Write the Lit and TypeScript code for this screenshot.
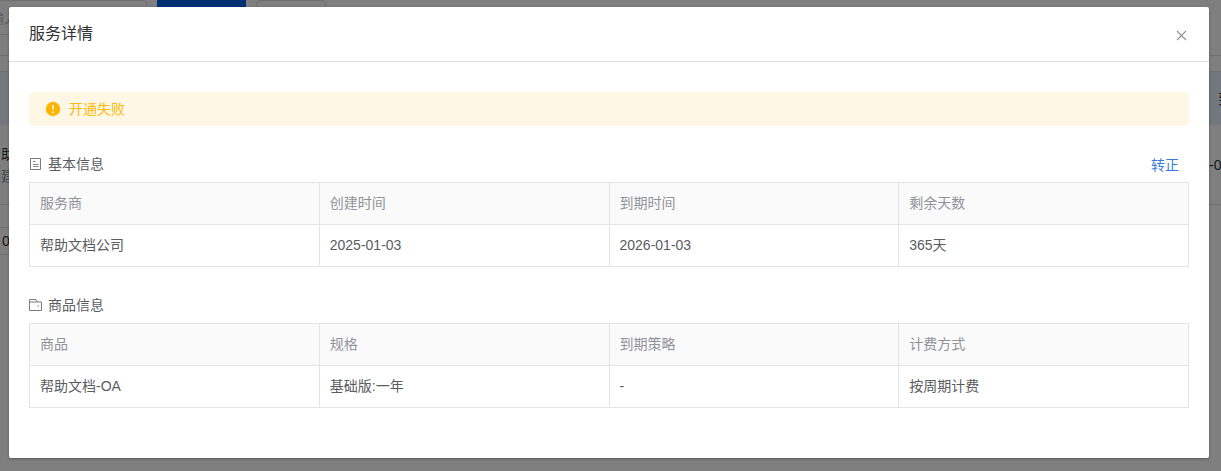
import { LitElement, html, css, svg } from "lit";
import { customElement, property } from "lit/decorators.js";

@customElement("info-table")
class InfoTable extends LitElement {
  @property({ attribute: false }) heads: string[] = [];
  @property({ attribute: false }) cells: string[] = [];
  @property() label = "";

  static styles = css`
    :host { display: block; }
    table {
      width: 100%;
      table-layout: fixed;
      border-collapse: collapse;
      font-size: 14px;
      line-height: 21px;
      color: #5a5c60;
    }
    th, td {
      padding: 10px;
      border: 1px solid #e4e4e6;
      text-align: left;
      font-weight: 400;
    }
    th { background: #fafafa; color: #909399; }
  `;

  render() {
    return html`
      <table aria-label=${this.label}>
        <thead><tr>${this.heads.map((h) => html`<th scope="col">${h}</th>`)}</tr></thead>
        <tbody><tr>${this.cells.map((c) => html`<td>${c}</td>`)}</tr></tbody>
      </table>
    `;
  }
}

@customElement("page-behind")
class PageBehind extends LitElement {
  static styles = css`
    :host {
      display: block;
      overflow: hidden;
      background: #fff;
      font-size: 14px;
      color: #515a6e;
    }
    .page { margin: 0 -64px; }
    .toolbar {
      display: flex;
      gap: 10px;
      padding: 0 64px 20px;
      border-bottom: 1px solid #dcdee2;
    }
    .search {
      box-sizing: border-box;
      width: 211px;
      height: 35px;
      margin-left: -64px;
      padding: 0 0 0 53px;
      border: 1px solid #dcdee2;
      border-radius: 4px;
      font: inherit;
    }
    .search::placeholder { color: #b0b4bc; opacity: 1; }
    button {
      box-sizing: border-box;
      height: 35px;
      font: inherit;
      border: 1px solid #dcdee2;
      border-radius: 4px;
      background: #fff;
    }
    .primary { width: 89px; background: #0060e6; border-color: #0060e6; border-radius: 0; color: #fff; }
    .plain { width: 70px; color: #515a6e; }
    .list {
      width: 100%;
      margin-top: 15px;
      border-collapse: separate;
      border-spacing: 0;
      border-top: 1px solid #dcdee2;
      line-height: 22px;
    }
    .list th {
      height: 53px;
      padding: 0;
      background: #e6f0fc;
      font-weight: 400;
      text-align: left;
    }
    .list td {
      height: 79px;
      padding: 0;
      border-bottom: 1px solid #dcdee2;
      color: #303133;
    }
    .list td:first-child { padding-left: 23px; }
    .list th:last-child { width: 67px; padding-left: 9px; color: #303133; }
    .list .sub { color: #808695; }
    .pager {
      box-sizing: border-box;
      width: 120px;
      height: 28px;
      margin: 22px 0 0 24px;
      padding: 0 0 0 41px;
      border: 1px solid #dcdee2;
      background: #fff;
      appearance: none;
      font: inherit;
      color: #303133;
    }
  `;

  render() {
    return html`
      <div class="page">
        <div class="toolbar">
          <input class="search" aria-label="搜索" placeholder="输入" />
          <button class="primary" aria-label="查询"></button>
          <button class="plain" aria-label="重置"></button>
        </div>
        <table class="list">
          <thead><tr><th></th><th>到</th></tr></thead>
          <tbody>
            <tr>
              <td><div>公司帮助</div><div class="sub">公司创建</div></td>
              <td>-03</td>
            </tr>
          </tbody>
        </table>
        <select class="pager" aria-label="每页条数"><option>0</option></select>
      </div>
    `;
  }
}

const closeIcon = svg`<path d="M1 1l9 9M10 1l-9 9" />`;

@customElement("app-root")
class AppRoot extends LitElement {
  static styles = css`
    :host {
      display: grid;
      min-height: 100vh;
      font-family: "Liberation Sans", "Noto Sans CJK SC", sans-serif;
    }
    page-behind, .mask { grid-area: 1 / 1; min-width: 0; }
    .mask {
      z-index: 1;
      padding: 7px 12px 13px 9px;
      background: rgba(0, 0, 0, 0.5);
    }
    .dialog {
      background: #fff;
      border-radius: 2px;
      box-shadow: 0 1px 3px rgba(0, 0, 0, 0.3);
    }
    header {
      display: flex;
      align-items: center;
      justify-content: space-between;
      height: 54px;
      padding: 0 20px;
      border-bottom: 1px solid #dcdddf;
    }
    h1 {
      margin: 0;
      font-size: 16px;
      line-height: 24px;
      font-weight: 400;
      color: #303133;
    }
    button {
      padding: 0;
      border: 0;
      background: none;
      font: inherit;
    }
    .close { display: flex; padding: 3px 2px 0 0; }
    .close svg { fill: none; stroke: #909399; stroke-width: 1.1; }
    .body { padding: 30px 20px 50px; }
    .alert {
      display: flex;
      align-items: center;
      gap: 8px;
      height: 34px;
      padding: 0 16px;
      border-radius: 4px;
      background: #fff7e6;
      color: #fcb80b;
      font-size: 14px;
    }
    .alert span, h2 { padding-bottom: 2px; }
    .bar {
      display: flex;
      align-items: center;
      gap: 5px;
      height: 24px;
      padding: 26px 0 6px;
      font-size: 14px;
    }
    .bar svg { fill: none; stroke: #7a7c80; }
    h2 { margin: 0; font-size: 14px; font-weight: 400; color: #5a5c60; }
    .link { margin-left: auto; padding-right: 10px; color: #3a7bd9; }
  `;

  render() {
    return html`
      <page-behind inert></page-behind>
      <div class="mask">
        <section class="dialog" role="dialog" aria-labelledby="title">
          <header>
            <h1 id="title">服务详情</h1>
            <button class="close" aria-label="关闭">
              <svg width="11" height="11" viewBox="0 0 11 11">${closeIcon}</svg>
            </button>
          </header>
          <div class="body">
            <div class="alert" role="alert">
              <svg width="16" height="16" viewBox="0 0 16 16">
                <circle cx="8" cy="8" r="7.2" fill="#ffb400" />
                <path d="M7 4h2l-.4 5H7.400z" fill="#fff7e6" />
                <circle cx="8" cy="11.200" r="1" fill="#fff7e6" />
              </svg>
              <span>开通失败</span>
            </div>
            <div class="bar">
              <svg width="14" height="14" viewBox="0 0 14 14">
                <path d="M1.500 1.500h10v11h-10z" />
                <path d="M4 4.500h2.500M4 7.500h5.500M4 9.500h5.500" stroke-width=".9" />
              </svg>
              <h2>基本信息</h2>
              <button class="link">转正</button>
            </div>
            <info-table
              label="基本信息"
              .heads=${["服务商", "创建时间", "到期时间", "剩余天数"]}
              .cells=${["帮助文档公司", "2025-01-03", "2026-01-03", "365天"]}
            ></info-table>
            <div class="bar">
              <svg width="14" height="14" viewBox="0 0 14 14">
                <path d="M.5 12.500v-11h6.500l1.500 2.500h4v8.500zM.5 4h8" />
                <path d="M8.500 8h1.500" />
              </svg>
              <h2>商品信息</h2>
            </div>
            <info-table
              label="商品信息"
              .heads=${["商品", "规格", "到期策略", "计费方式"]}
              .cells=${["帮助文档-OA", "基础版:一年", "-", "按周期计费"]}
            ></info-table>
          </div>
        </section>
      </div>
    `;
  }
}
